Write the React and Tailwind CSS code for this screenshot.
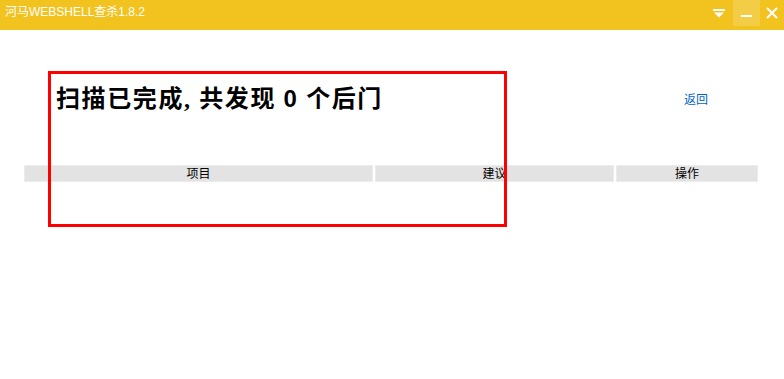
import React from "react";

export default function App() {
  return (
    <div className="relative w-[784px] h-[379px] bg-white overflow-hidden" style={{ fontFamily: '"Liberation Sans", "Noto Sans CJK SC", sans-serif' }}>
      {/* title bar */}
      <div className="h-[30px] bg-[#f2c21f] flex items-start">
        <div className="pl-[5px] pt-[4px] text-[12px] leading-[16px] text-white flex-1">河马WEBSHELL查杀1.8.2</div>
        <div className="flex items-start">
          <div className="w-[28px] h-[26px] flex items-center justify-center">
            <svg width="12" height="9" viewBox="0 0 12 9">
              <rect x="0" y="0" width="12" height="2" fill="#fff" />
              <polygon points="1,3.5 11,3.5 6,8.5" fill="#fff" />
            </svg>
          </div>
          <div className="w-[27px] h-[26px] bg-[#f4cd47] flex items-center justify-center">
            <div className="w-[11px] h-[2px] bg-white mt-[6px]"></div>
          </div>
          <div className="w-[24px] h-[26px] flex items-center justify-center">
            <svg width="12" height="12" viewBox="0 0 12 12">
              <path d="M1 1 L11 11 M11 1 L1 11" stroke="#fff" strokeWidth="2" />
            </svg>
          </div>
        </div>
      </div>

      {/* heading row */}
      <div className="flex items-center justify-between pl-[56px] pr-[76px] mt-[53px] h-[32px]">
        <div className="text-[24px] leading-[32px] font-bold text-black tracking-[1.6px]" style={{ fontFamily: '"Liberation Serif", "Noto Sans CJK SC", serif' }}>
          扫描已完成, 共发现 <span style={{ fontFamily: '"Liberation Sans", sans-serif' }}>0</span> 个后门
        </div>
        <a className="text-[12px] leading-[16px] text-[#0063c6] mt-[2px]">返回</a>
      </div>

      {/* table header */}
      <div className="mt-[50px] ml-[24px] w-[734px] flex gap-[2px] text-[12px] leading-[15px] text-black">
        <div className="w-[349px] h-[17px] bg-[#e3e3e3] border border-[#ececec] flex items-center justify-center pt-[2px]">项目</div>
        <div className="w-[239px] h-[17px] bg-[#e3e3e3] border border-[#ececec] flex items-center justify-center pt-[2px]">建议</div>
        <div className="flex-1 h-[17px] bg-[#e3e3e3] border border-[#ececec] flex items-center justify-center pt-[2px]">操作</div>
      </div>

      {/* red annotation box */}
      <div className="absolute left-[48px] top-[71px] w-[459px] h-[156px] border-[3px] border-[#ff0000]"></div>
    </div>
  );
}
